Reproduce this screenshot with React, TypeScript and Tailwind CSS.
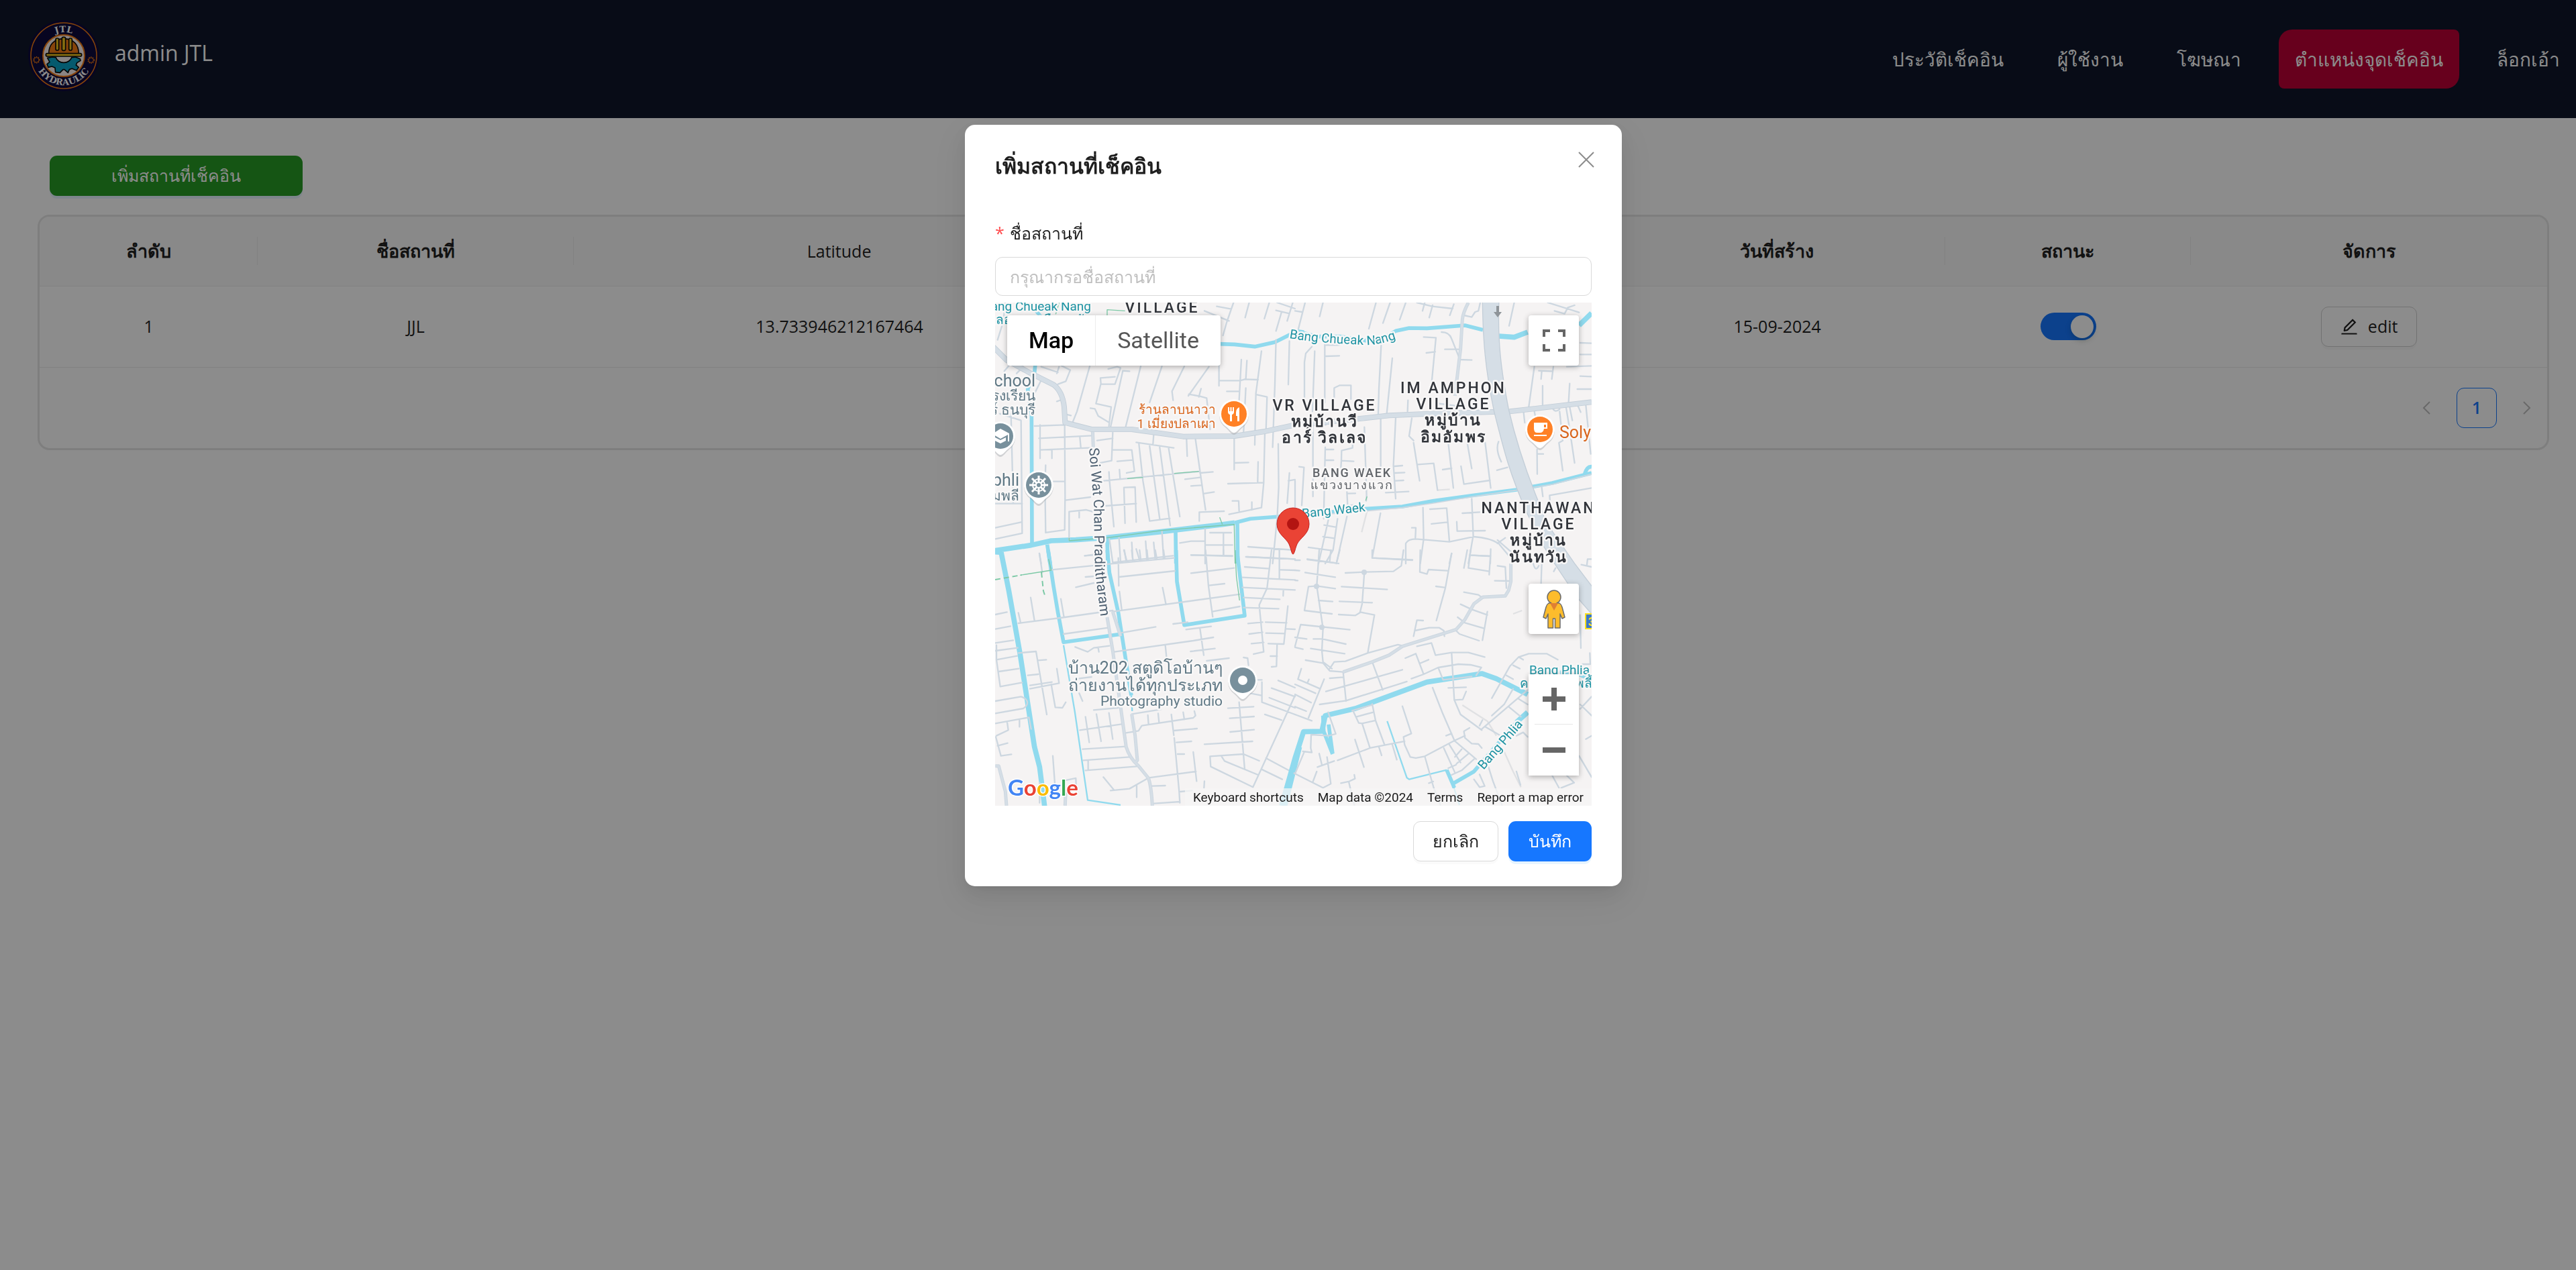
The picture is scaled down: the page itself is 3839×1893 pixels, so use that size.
import React from "react";

const WATER = "#90daee";
const MINOR = "#cdd7e0";
const MAJOR = "#d5dee6";
const MAJOR_EDGE = "#c3ced8";
const TRACK = "#7cc9a6";
const PALE = "#e0e1e3";

const QUADRANTS = [
  {
    id: "nw",
    transform: "translate(-13 -11) scale(0.3333)",
    minor:
      "M85 33L75 120L50 200M975 70L1085 115M1105 33L1075 120L1058 180M1030 50L1095 62M1175 33L1157 100M1265 33L1243 105M1295 68L1355 82M1320 75L1295 160M1300 33L1380 60M1370 33L1345 115M105 310L80 340M165 320L135 350M245 320L320 345M325 320L315 350M335 315L375 335L355 385L320 398M245 380L215 440M462 318L405 520L385 570M315 475L335 468M345 530L378 538M545 330L585 320L600 325L575 398L513 398M575 365L510 370L512 395L490 485L558 500L548 585M465 505L485 508L500 540L550 570M640 340L610 338L555 590M690 318L620 600M785 318L730 480M885 318L830 430L835 470M995 320L903 450M905 443L955 452L985 460L1000 600M960 418L950 455M1040 270L1040 405M1140 288L1130 470M1165 292L1160 375M1040 382L1135 382L1155 376L1215 378M1230 250L1205 440L1200 670M1075 430L1130 430M1210 445L1255 455L1250 610M1295 200L1290 400L1280 680M1355 205L1350 400M1150 610L1160 415M110 530L120 930M60 530L155 560L160 1065L40 1090M155 1015L40 1040M40 932L160 932M215 585L348 580M235 640L470 628M350 580L352 900L350 1050L265 1062L262 850L265 760M240 580L240 730M240 692L470 682M293 695L293 730M418 635L422 680M300 833L350 833M352 917L465 903M370 1095L370 968L445 960L475 968M415 965L415 995M565 615L560 740L510 750M495 650L565 640M565 692L650 692L662 788L627 795M585 743L655 737M670 658L838 683M748 625L745 665M682 665L700 830L730 1010L820 998M730 675L775 1000M775 680L822 1030M815 685L865 990M548 790L550 825L570 1035M595 780L598 820M525 830L955 788M895 645L898 720M935 645L980 960M955 795L1013 790M888 823L955 815M915 853L960 850M970 888L1018 880M1108 640L1108 780M1108 750L1172 748M1215 745L1213 835M1080 843L1240 838M1245 620L1240 840L1230 950L1085 980M1100 920L1128 920L1130 965M1187 925L1187 960M952 1010L952 970L1063 966M620 1020L615 860L665 858L670 1015M535 942L670 932M1305 665L1307 860L1300 1000L1280 1200M1355 795L1345 930M1380 825L1350 830M550 1090L565 1195L835 1165M593 1085L600 1195M615 1140L628 1190M650 1105L655 1190M670 1135L685 1185M712 1100L718 1185M748 1105L755 1180M785 1055L792 1175M865 1108L915 1100L975 1100M978 1045L978 1200M1000 1062L1095 1062M1060 1062L1060 1165M980 1117L1100 1117M915 1162L1100 1165M1170 1125L1380 1140M1165 1170L1380 1180M440 1165L480 1160M237 1155L245 1200",
    major: "M0 200L90 290L200 350L300 400Q340 430 348 500L352 570L470 600L650 600L880 632L1110 630L1240 610L1380 580L1520 570",
    middle: "M475 605L478 680",
    water: "M0 1148L200 1118L290 1098L400 1094L540 1084L780 1058L1050 1026L1110 1018",
    waterMid:
      "M195 33L242 95L215 345L185 420L202 535L204 1110M1110 1018L1180 1000L1310 990L1380 980M1040 218L1110 220L1200 230L1290 210L1380 165M1122 1015L1124 1200M846 1055L848 1200M540 1090L543 1200M272 1115L285 1200",
    waterThin: "",
    track: "M370 1098L540 1085L785 1052L1108 1025L1112 1200M630 820L700 815M840 797L950 788M1043 993L1055 1025M540 90L540 65L620 70M325 33L310 85M370 1098L370 1085",
    pale: "",
  },
  {
    id: "ne",
    transform: "translate(447 -11) scale(0.3333)",
    minor:
      "M0 70L30 75M45 33L15 150M125 33L110 95M362 33L330 150M425 33L393 125M495 33L468 110M580 33L570 70M545 33L613 50L705 60M615 45L600 100M710 40L692 90M755 90L790 98L805 75L820 70L828 33M575 187L630 190L610 400M587 258L627 253M655 165Q690 165 700 195L738 290M670 242L735 242M735 288L790 290M75 230L48 260L42 300L42 480M88 250L78 520M133 210L133 480M135 223L198 223M138 273L198 271M385 225L375 420L372 530M435 282L410 530M980 33L957 137M1070 320L1045 500M1090 338L1150 340M1103 340L1100 375M1155 320L1148 375M1107 405L1107 490M1228 395L1223 480M1262 420L1326 420M1275 362L1326 364M1215 320L1326 316M1275 265L1326 265M1275 213L1326 215M1130 33L1270 77M1160 70L1205 83L1220 55L1250 45M175 470L175 415L200 403L250 403L250 465M80 560L80 900M135 680L128 1000M135 690L172 690M135 738L172 738M258 650L257 683L208 695L207 740L262 743M207 740L205 770M310 590L320 900L318 920M383 545L383 780M450 550L440 760L450 910M445 765L480 762M448 795L490 793M450 830L485 828M405 883L508 878M232 880L235 940L270 938M235 887L270 886M522 550L510 630L530 650M530 660L557 830M548 757L620 752L637 872M685 660L708 862M660 780L700 774M770 660L790 775M742 765L755 845L872 828M850 660L875 862M505 470L503 520M645 485L720 495M910 655Q895 690 922 745M903 783L950 770M1022 525L1027 570M1070 520L1075 545M1082 690L1083 800M1083 710L1110 710M1150 500Q1160 530 1183 510M1183 520L1197 650L1180 660L1197 785M1210 490L1228 600L1250 750M1300 490L1322 710M1228 500L1240 560M1265 495L1277 523M1140 920L1138 895L1326 862M18 767L40 770L30 940M0 830L0 960M150 1000L105 1200M190 1000L170 1140L135 1200M232 990L185 1200M130 1028L185 1038M125 1080L175 1087M60 1128L165 1142M55 1180L195 1200M382 975L345 1175L525 1185M603 957L678 952L690 1100M572 950L575 1090L560 1200M610 1023L680 1015M522 1040L540 1040L538 1085M790 910L797 1080M748 975L825 970M723 1013L725 1055L850 1053M495 1200L495 1110Q505 1090 540 1090L690 1103L800 1080Q870 1085 910 1110L960 1170M795 1085L775 1200M700 1155L690 1200M785 1163L875 1167M875 1135L873 1200M905 1110L940 1085M905 1095L980 1160M1103 860L1108 900",
    major: "M-10 575L140 568L290 552L420 538L600 530L960 520L1326 478",
    middle: "M775 33Q750 80 748 110L740 240L715 450",
    water: "M912 183L980 188L1040 165M1270 135L1326 80",
    waterMid:
      "M0 160L100 185L200 185L330 205L400 190L450 160L510 147L590 148L760 135L840 155M0 160L40 165M-20 975L130 972L320 955L480 945L620 920L800 895L990 870L1150 840L1326 795M1295 800Q1305 765 1326 767",
    waterThin: "",
    track: "M322 900L316 918",
    pale: "M322 965L298 1060M637 872L692 868",
  },
  {
    id: "sw",
    transform: "translate(-13 369) scale(0.3333)",
    minor:
      "M237 15L250 100M290 88L550 62L840 35M440 25L480 22M443 120L478 117M400 166L480 147M590 35L592 160M593 120L843 93M617 0L625 50M650 0L655 45M685 0L690 42M718 0L722 40M755 0L762 38M792 0L797 35M595 185L605 265M565 275L1135 197M788 168L803 243M980 0L993 160L1012 298M915 22L1100 27M1060 0L1060 25M915 103L1108 80M995 158L1065 150M1010 275L1133 252M143 327L330 303L565 270M198 212L215 315M333 218L347 300M143 280L152 320M40 288L92 277M40 353L108 340M40 415L120 403M40 450L140 437M45 425L45 490L62 610L160 592M45 490L138 473M55 543L145 530M345 375L545 347M143 460L222 453L270 735M230 493L268 490M185 560L232 555M195 620L325 595L315 530M195 605L293 590M290 600L308 703L340 705L355 680M40 675L155 655Q185 665 183 685Q180 700 165 708L40 730M40 775L190 748L200 800M93 770L98 805L45 830M148 760L148 790M42 835L65 920L112 913M50 875L95 863M297 920L308 1070M238 1040L238 1130M350 1030L400 1020L402 1070M600 370L757 343M835 330L900 322M572 455L925 405L1015 390M800 425L805 475M893 355L1005 341M955 350L972 470M913 453L1022 440M985 495L1085 483M397 433L453 455L480 437L550 428M500 437L503 455M408 575L470 567M480 715L590 705M415 640L430 675M443 745L460 860M492 733L513 855M548 728L565 845M418 805L605 778M430 890L625 878M432 940L640 925M443 985L672 967M455 940L455 983M523 1015L570 1072M555 1075L640 1067L722 1020M672 1050L672 1105M650 733L780 712M625 817L680 808L695 785L925 750L935 740L930 720M722 738L725 778M768 730L772 770M827 735L838 828M880 725L885 757M838 807L942 798M840 840L862 1080L865 1130M850 860L917 855M855 912L885 912M925 903L940 1033M725 1018L937 990M740 1055L800 1053M868 1080L920 1075M750 1133L865 1125M975 1033L973 1063M1130 680L1155 980M1080 707L1195 700M1088 752L1197 744M1090 813L1197 803M975 868L1190 855M1000 922L1150 912L1220 942M1000 922L1003 968L1192 1060M1050 920L1065 943L1215 1005M1192 1060L1380 650M1245 735L1320 760M1265 660L1380 705M1305 583L1380 615M1275 617L1380 655M1232 590L1232 680L1380 735M1250 930L1380 1000M1230 980L1323 1025M1150 480L1168 483L1172 515M1210 580L1232 580M1180 640L1230 650M1275 0L1255 170L1220 245L1240 455L1195 465M1160 30L1380 40M1155 75L1265 83M1145 122L1380 133M1145 167L1380 178M1150 212L1312 220M1150 257L1307 262M1328 180L1327 205M1310 0L1310 128M1315 88L1380 90M1348 250L1330 420L1260 418M1170 328L1235 322M1248 322L1343 325M1250 371L1335 373M1175 375L1235 367M1185 418L1240 413M1300 420L1297 520L1275 522M1270 474L1300 474M1343 352L1380 354",
    major: "",
    middle:
      "M540 300L565 450L600 700L625 880Q640 930 680 965L725 1020Q738 1060 742 1143M565 275L600 385M650 733L665 830L675 940L665 950M40 965L55 965L85 1080L90 1143M355 1070L352 1143",
    water: "M66 10L100 180L150 460L215 880L238 970L262 1160M0 5L70 10M1400 880L1330 1160",
    waterMid: "M276 0L300 160L320 280L345 412L605 375M541 0L550 100L590 280L620 470L640 600L648 650M848 0L852 140L885 335L1155 293L1120 0",
    waterThin: "M345 425L395 720L453 1118L600 1140M648 650L652 720",
    track: "M150 112L290 90L278 40M1112 0L1118 120L1132 225",
    pale: "",
  },
  {
    id: "se",
    transform: "translate(447 369) scale(0.3333)",
    minor:
      "M108 0L97 160L125 350L120 450L125 500L165 530M55 42L185 58L200 0M160 0L155 50M45 100L180 121M0 45L22 45M0 90L20 92M0 135L12 136M97 160L180 172M97 160L60 163L42 270L165 285M105 225L168 230M225 102L310 98L440 95L475 70L485 0M310 98L300 240L290 280L270 292L195 288M208 163L412 176M198 229L345 235M345 0L345 35L525 43M295 278L355 290L325 460M245 356L25 333L0 430M0 390L52 397M82 397L122 397L227 420M0 435L35 443M70 440L222 463M47 492L125 505L155 540L215 545M560 0L558 98L590 107L597 87L680 92M700 15L672 170L632 315M630 162L668 167M770 0L755 80M785 0L775 80L868 95M873 35L868 110M780 22L870 27M155 530L175 500L225 497L325 460L460 423L490 430M755 188L820 200L840 215M740 242L790 265L860 290M727 300L760 325L845 350M860 275L838 403M720 360L735 375L823 405M893 137L960 138M905 70L940 75L945 170M530 385L545 313L573 315M535 360L600 347L645 347L665 360L668 385M545 430L610 415L628 470L700 458L775 458L848 478M345 500L392 625M215 545L228 675M155 573L215 568M138 632L480 535M110 690L228 673L500 588M493 483L540 463L575 555L520 575M557 507L597 490M575 555L640 525L730 510L785 513L833 525L810 560M640 525L662 580L790 565M700 460L712 670L740 735L835 805M685 616L765 613M712 670L750 668L765 632M615 615L660 730L712 850M835 800L1040 625M825 785L838 760M880 740L935 690L975 620M880 662L960 520L1000 478L1045 463L1125 463L1175 490M1000 478L1020 490M975 515L1005 530M945 560L975 577M955 700L1010 745M1000 665L1040 690M0 600L92 640M0 645L72 682M0 700L50 720M0 735L75 763M130 577L60 750M28 530L13 577L55 595L112 620M62 578L55 595M260 720L285 773L300 775L360 762M275 745L350 725M345 688L360 762L400 870M255 718L345 692M300 775L335 885M148 725L182 822L150 830L72 825L70 885L75 905L35 900M40 905L0 1000M190 940L335 885L490 855M268 847L308 970M435 870L455 937M375 880L387 918M480 698L520 820L485 835L490 870L515 925L540 930L580 922L712 852L760 830M780 795L755 810L760 840L790 865L820 867L835 885M675 830L700 820M580 922L620 1063L650 1140M598 1042L618 1035M665 885L715 995M690 870L740 950M712 852L810 935M715 925L745 890M722 955L775 910M700 1005L745 985L800 935M685 975L720 960M100 970L175 943M108 910L120 960M143 925L160 1045L125 1063L0 1000M97 990L80 1035M205 1042L240 1035L268 1022L265 1005M240 1035L265 1140M850 790L920 830M865 970L885 1033L925 1140M825 1003L848 1055L825 1060L800 1025M990 990L1008 1050M1270 920L1326 1015M1150 1008L1180 1063M1215 1008L1248 1040L1190 1063M1300 845L1326 830M990 830L1020 815L1040 835M1275 710L1326 655M1275 690L1326 740M1285 510L1320 510L1318 460M1275 290L1278 438M1065 60Q1075 100 1090 70M1103 60L1100 150M1157 95L1165 80M1280 65L1326 75M1305 65L1308 40L1326 40",
    major: "",
    middle: "M215 545L345 500L420 470L480 430L720 355L760 310L800 240L840 210L940 205L955 180L965 140L965 60",
    water: "M-60 1143L0 930L38 812L120 810L135 740L270 708L590 590L835 552L900 575L1040 645M1040 725L990 770M1185 550L1250 545L1326 575",
    waterMid: "M990 770L800 990L705 1045L678 983M150 780L168 910M125 740L128 810L168 912M705 1045L712 1063",
    waterThin: "M678 983L510 1025L500 1018L412 765M705 1045L735 1140",
    track: "",
    pale: "M748 693L860 765L900 830M930 890L975 990L1010 1060M975 285L1015 270",
  },
];

const HALO = "stroke-[#f8f7f7] stroke-[5px] [paint-order:stroke] [stroke-linejoin:round]";

function Pin({ x, y, color, children }: { x: number; y: number; color: string; children: React.ReactNode }) {
  return (
    <g transform={`translate(${x} ${y})`}>
      <path d="M0 29C-4 29 -7 23 -13 18A22 22 0 1 1 13 18C7 23 4 29 0 29Z" fill="#9aa0a6" opacity="0.4" transform="translate(0 2)" />
      <path d="M0 28C-4 28 -7 22 -13 18A22 22 0 1 1 13 18C7 22 4 28 0 28Z" fill="#fff" />
      <circle r="19" fill={color} />
      {children}
    </g>
  );
}

function MapDrawing() {
  return (
    <svg
      viewBox="0 0 889 750"
      preserveAspectRatio="xMidYMid slice"
      className="block h-full w-full bg-[#f5f3f3] font-[Roboto,sans-serif]"
      role="img"
      aria-label="Map of Bang Waek"
    >
      <g fill="none" strokeLinejoin="round">
        {QUADRANTS.map((q) => (
          <g key={q.id} transform={q.transform}>
            <path d={q.pale} stroke={PALE} strokeWidth="7" />
            <path d={q.water} stroke={WATER} strokeWidth="23" />
            <path d={q.waterMid} stroke={WATER} strokeWidth="17" />
            <path d={q.waterThin} stroke={WATER} strokeWidth="7" />
            <path d={q.minor} stroke={MINOR} strokeWidth="7" strokeLinecap="round" />
            <path d={q.middle} stroke={MINOR} strokeWidth="15" />
            <path d={q.middle} stroke={MAJOR} strokeWidth="9" />
            <path d={q.track} stroke={TRACK} strokeWidth="4" />
          </g>
        ))}
        {QUADRANTS.slice(0, 2).map((q) => (
          <g key={q.id} transform={q.transform}>
            <path d={q.major} stroke={MAJOR_EDGE} strokeWidth="24" />
            <path d={q.major} stroke={MAJOR} strokeWidth="19" />
          </g>
        ))}
        <g transform="translate(447 -11) scale(0.3333)">
          <path d="M-20 985L130 980L320 965L480 950L620 930L800 900L990 872L1150 846L1326 800" stroke={MINOR} strokeWidth="5" />
          <path
            d="M838 20L912 20C905 200 920 330 955 510C985 640 1030 780 1085 915L1120 1010L1160 1070L1250 1200L1326 1300L1400 1400L1400 1500L1326 1425L1260 1350L1160 1200L1110 1120L1040 980C960 800 935 700 890 520C850 330 840 200 838 20Z"
            fill={MAJOR}
            stroke={MAJOR_EDGE}
            strokeWidth="4"
          />
        </g>
        <path d="M0 413L40 406M69 402L72 430L74 436" stroke={TRACK} strokeWidth="2" strokeDasharray="8 5" />
      </g>
      <g fill={MINOR}>
        <circle cx="479" cy="423" r="4" />
        <circle cx="550" cy="402" r="4" />
        <circle cx="487" cy="484" r="4" />
      </g>
      <path d="M747 5h4v9h4l-6 8l-6 -8h4z" fill="#8e9499" />

      <g className={`fill-[#1d93a3] text-[19px] ${HALO}`}>
        <text x="143" y="12" textAnchor="end">Bang Chueak Nang</text>
        <text x="142" y="32" textAnchor="end">คลองบางเชือกหนัง</text>
        <path id="canal-north" d="M438 53C480 60 515 61 550 63C570 63 580 60 604 52" fill="none" stroke="none" />
        <text>
          <textPath href="#canal-north">Bang Chueak Nang</textPath>
        </text>
        <text transform="translate(458 321) rotate(-6)">Bang Waek</text>
        <text x="796" y="554">Bang Phlia</text>
        <text x="782" y="574">คลองบางเพลี้ย</text>
        <text transform="translate(728 697) rotate(-49)">Bang Phlia</text>
      </g>

      <g className={`fill-[#31343a] text-[23px] font-medium tracking-[3px] ${HALO}`} textAnchor="middle">
        <text x="249" y="15">VILLAGE</text>
        <text x="491" y="161">VR VILLAGE</text>
        <text x="683" y="135">IM AMPHON</text>
        <text x="683" y="159">VILLAGE</text>
        <text x="810" y="314">NANTHAWAN</text>
        <text x="810" y="338">VILLAGE</text>
      </g>
      <g className={`fill-[#31343a] text-[23px] font-bold tracking-widest ${HALO}`} textAnchor="middle">
        <text x="249" y="39">หมู่บ้าน</text>
        <text x="491" y="185">หมู่บ้านวี</text>
        <text x="491" y="209">อาร์ วิลเลจ</text>
        <text x="683" y="183">หมู่บ้าน</text>
        <text x="683" y="208">อิมอัมพร</text>
        <text x="810" y="362">หมู่บ้าน</text>
        <text x="810" y="387">นันทวัน</text>
      </g>
      <g className={`fill-[#5f6368] text-[18px] font-medium tracking-widest ${HALO}`} textAnchor="middle">
        <text x="532" y="260">BANG WAEK</text>
        <text x="532" y="278">แขวงบางแวก</text>
      </g>

      <g className={`fill-[#5f7885] text-[25px] ${HALO}`} textAnchor="end">
        <text x="60" y="125">School</text>
        <text x="60" y="146" className="text-[21px]">โรงเรียน</text>
        <text x="60" y="167" className="text-[21px]">ร์ ธนบุรี</text>
        <text x="36" y="273">Champhli</text>
        <text x="36" y="295" className="text-[21px]">ชุมพลี</text>
        <text x="339" y="553">บ้าน202 สตูดิโอบ้านๆ</text>
        <text x="339" y="579">ถ่ายงานได้ทุกประเภท</text>
        <text x="339" y="601" className="text-[21px]">Photography studio</text>
      </g>

      <g className={`fill-[#d9651c] text-[19px] ${HALO}`}>
        <text x="329" y="166" textAnchor="end">ร้านลาบนาวา</text>
        <text x="329" y="187" textAnchor="end">1 เมี่ยงปลาเผา</text>
        <text x="841" y="202" className="text-[25px]">Solyn</text>
      </g>

      <g className={`fill-[#4d5f70] text-[21px] ${HALO}`}>
        <path id="soi" d="M140 217L147 300L149 400L160 490" fill="none" stroke="none" />
        <text>
          <textPath href="#soi">Soi Wat Chan Pradittharam</textPath>
        </text>
      </g>

      <Pin x={356} y={166} color="#ff8126">
        <path d="M-9 -10v7q0 3 3 4v10h3v-10q3 -1 3 -4v-7h-2v6h-1.500v-6h-2v6h-1.500v-6zM8 -10q-5 2 -5 8v5h2v8h3z" fill="#fff" />
      </Pin>
      <Pin x={812} y={189} color="#ff8126">
        <path d="M-9 -10h20v9h-5q-1 6 -6 6h-4q-5 0 -5 -6zM6 -7v4h3v-4zM-9 8h19v2h-19z" fill="#fff" fillRule="evenodd" />
      </Pin>
      <Pin x={8} y={199} color="#78909c">
        <path d="M0 -11l13 7v12h-2v-10l-11 6l-12 -7zM-8 2l8 4l8 -4v5l-8 4l-8 -4z" fill="#fff" />
      </Pin>
      <Pin x={65} y={272} color="#78909c">
        <g stroke="#fff" fill="none">
          <circle r="9" strokeWidth="2" />
          <path d="M0 -14V-4M0 14V4M-14 0H-4M14 0H4M-10 -10L-3 -3M10 10L3 3M-10 10L-3 3M10 -10L3 -3" strokeWidth="3" />
          <circle r="4" strokeWidth="2" />
        </g>
      </Pin>
      <Pin x={369} y={563} color="#78909c">
        <circle r="7" fill="#fff" />
      </Pin>

      <g transform="translate(444 331)">
        <path
          d="M0 44C-2 44 -3 36 -6 29C-10 20 -24 14 -24 -1A24 24 0 0 1 24 -1C24 14 10 20 6 29C3 36 2 44 0 44Z"
          fill="#ea4335"
          stroke="#c5221f"
          strokeWidth="1"
        />
        <circle r="9" cy="-1" fill="#b31412" />
      </g>

      <g>
        <rect x="880" y="464" width="24" height="22" fill="#3b78c8" stroke="#fde01c" strokeWidth="2" />
        <text x="884" y="482" className="fill-[#fde01c] text-[18px] font-bold">3</text>
      </g>

      <text
        x="19"
        y="735"
        className="font-[Lato,sans-serif] text-[33px] font-bold stroke-white stroke-[3px] [paint-order:stroke] [stroke-linejoin:round]"
      >
        <tspan fill="#4285f4">G</tspan>
        <tspan fill="#ea4335">o</tspan>
        <tspan fill="#fbbc04">o</tspan>
        <tspan fill="#4285f4">g</tspan>
        <tspan fill="#34a853">l</tspan>
        <tspan fill="#ea4335">e</tspan>
      </text>
    </svg>
  );
}

function Logo() {
  return (
    <svg viewBox="0 0 108 108" className="size-[108px] shrink-0" role="img" aria-label="JTL Hydraulic">
      <circle cx="54" cy="54" r="53" fill="#0e0a3c" />
      <circle cx="54" cy="54" r="49" fill="none" stroke="#f57c14" strokeWidth="1.500" />
      <circle cx="54" cy="54" r="31" fill="#fbf3f0" stroke="#f57c14" strokeWidth="2" />
      <g transform="translate(54 54) scale(0.3333) translate(-285 -248)" stroke="#0a0a0a" strokeWidth="5" strokeLinejoin="round">
        <path
          d="M212 258L234 254L250 256A36 30 0 0 0 320 256L338 254L358 262L360 270L344 280L340 290L352 300L342 314L322 306L310 310L304 324L288 310L282 310L268 324L248 322L246 302L232 296L216 300L210 286L222 276Z"
          fill="#0aa5c8"
        />
        <path d="M218 240C218 200 240 172 285 172C330 172 352 200 352 240Z" fill="#f57c14" />
        <rect x="249" y="170" width="14" height="54" rx="6" fill="#f5c81e" />
        <rect x="277" y="165" width="16" height="60" rx="6" fill="#f5c81e" />
        <rect x="308" y="170" width="14" height="54" rx="6" fill="#f5c81e" />
        <rect x="205" y="238" width="160" height="13" rx="6" fill="#f5c81e" />
        <g fill="none" stroke="#f57c14">
          <circle cx="163" cy="267" r="11" strokeWidth="3" />
          <circle cx="163" cy="267" r="14" strokeWidth="4" strokeDasharray="4 5" />
          <circle cx="407" cy="268" r="11" strokeWidth="3" />
          <circle cx="407" cy="268" r="14" strokeWidth="4" strokeDasharray="4 5" />
        </g>
      </g>
      <path id="logo-top" d="M19 54A35 35 0 0 1 89 54" fill="none" />
      <path id="logo-bottom" d="M10 54A44 44 0 0 0 98 54" fill="none" />
      <g className="fill-white font-['DejaVu_Serif',serif] font-bold" textAnchor="middle">
        <text className="text-[13px]">
          <textPath href="#logo-top" startOffset="50%">JTL</textPath>
        </text>
        <text className="text-[13px]">
          <textPath href="#logo-bottom" startOffset="50%">HYDRAULIC</textPath>
        </text>
      </g>
    </svg>
  );
}

const NAV = ["ประวัติเช็คอิน", "ผู้ใช้งาน", "โฆษณา", "ตำแหน่งจุดเช็คอิน", "ล็อกเอ้า"];
const ACTIVE = "ตำแหน่งจุดเช็คอิน";

const COLUMNS = [
  { title: "ลำดับ", width: "w-[8.7%]" },
  { title: "ชื่อสถานที่", width: "w-[12.6%]" },
  { title: "Latitude", width: "w-[21.2%]" },
  { title: "", width: "w-[20.1%]" },
  { title: "วันที่สร้าง", width: "w-[13.4%]" },
  { title: "สถานะ", width: "w-[9.8%]" },
  { title: "จัดการ", width: "w-[14.2%]" },
];

const CONTROL = "flex items-center justify-center bg-white shadow-[0_2px_8px_rgba(0,0,0,0.3)]";

function MapPanel() {
  return (
    <div className="relative mt-[10px] h-[750px] w-full overflow-hidden font-[Roboto,sans-serif]">
      <MapDrawing />
      <div className="absolute top-[19px] left-[18px] flex h-[75px] rounded-[4px] bg-white text-[34px] shadow-[0_2px_8px_rgba(0,0,0,0.3)]">
        <button type="button" className="border-r border-[#ececec] px-8 font-medium text-black">Map</button>
        <button type="button" className="px-8 text-[#565656]">Satellite</button>
      </div>
      <button type="button" aria-label="Toggle fullscreen view" className={`absolute top-[19px] right-[19px] size-[75px] rounded-[4px] ${CONTROL}`}>
        <svg viewBox="0 0 34 33" className="h-[33px] w-[34px]" fill="#666" aria-hidden="true">
          <path d="M0 0h11v4h-7v7h-4zM34 0v11h-4v-7h-7v-4zM0 33v-11h4v7h7v4zM34 33h-11v-4h7v-7h4z" />
        </svg>
      </button>
      <div className="absolute right-[19px] bottom-[45px] flex flex-col gap-[60px]">
        <button type="button" aria-label="Street View" className={`size-[75px] rounded-[4px] ${CONTROL}`}>
          <svg viewBox="0 0 34 58" className="h-[58px] w-[34px]" aria-hidden="true">
            <g fill="#fdbc2c" stroke="#6b6b6b" strokeWidth="1.500" strokeLinejoin="round">
              <path d="M9 20H25Q28 22 29 26L33 41L29 43L26 36V57H18.500V43H15.500V57H8V36L5 43L1 41L5 26Q6 22 9 20Z" />
              <circle cx="17" cy="11" r="10" />
            </g>
            <path d="M11 20H23L17 31Z" fill="#e07f33" />
          </svg>
        </button>
        <div className="flex flex-col bg-white px-[9px] shadow-[0_2px_8px_rgba(0,0,0,0.3)]">
          <button type="button" aria-label="Zoom in" className="flex h-[75px] w-[57px] items-center justify-center border-b border-[#e6e6e6]">
            <svg viewBox="0 0 34 34" className="size-[34px]" fill="#666" aria-hidden="true">
              <path d="M13 0h8v13h13v8h-13v13h-8v-13h-13v-8h13z" />
            </svg>
          </button>
          <button type="button" aria-label="Zoom out" className="flex h-[76px] w-[57px] items-center justify-center">
            <svg viewBox="0 0 34 8" className="h-2 w-[34px]" fill="#666" aria-hidden="true">
              <path d="M0 0h34v8h-34z" />
            </svg>
          </button>
        </div>
      </div>
      <div className="absolute right-0 bottom-0 flex h-[26px] items-center gap-[21px] bg-[#f5f5f5]/75 px-3 pt-0.5 text-[19px] leading-6 text-[#1a1a1a]">
        <button type="button">Keyboard shortcuts</button>
        <span>Map data ©2024</span>
        <a href="#terms">Terms</a>
        <a href="#report">Report a map error</a>
      </div>
    </div>
  );
}

export default function App() {
  return (
    <div className="relative min-h-screen bg-white font-['Open_Sans',sans-serif] text-[25px] text-[#1f1f1f]">
      <header className="flex h-[176px] items-center justify-between bg-slate-900 text-white">
        <div className="flex items-center gap-[22px] pb-2.5 pl-[41px]">
          <Logo />
          <span className="pb-2 text-[32px]">admin JTL</span>
        </div>
        <nav className="flex items-center gap-8 text-[28px] font-medium">
          {NAV.map((item) => (
            <a
              key={item}
              href="#nav"
              className={
                item === ACTIVE
                  ? "flex h-[88px] items-center rounded-[8px] rounded-tl-[20px] rounded-br-[20px] bg-[#bc0035] px-6"
                  : "flex h-[88px] items-center px-6"
              }
            >
              {item}
            </a>
          ))}
        </nav>
      </header>

      <main className="pt-14 pr-10 pl-14">
        <button
          type="button"
          className="ml-[18px] h-[60px] w-[377px] rounded-[11px] bg-[#279b25] text-white shadow-[0_4px_0_rgba(5,145,255,0.1)]"
        >
          เพิ่มสถานที่เช็คอิน
        </button>

        <section className="mt-7 overflow-hidden rounded-[18px] border-[3px] border-[#e6e6e6]">
          <table className="w-full table-fixed border-collapse text-center">
            <thead className="bg-[#fafafa]">
              <tr className="h-[103px] border-b border-[#ebebeb]">
                {COLUMNS.map((c, i) => (
                  <th key={i} scope="col" className={`${c.width} p-0`}>
                    <div className={i < 6 ? "flex h-[42px] items-center justify-center border-r border-[#ececec]" : "flex h-[42px] items-center justify-center"}>
                      <span className={c.title === "Latitude" ? "font-medium" : "text-[27px] font-bold"}>{c.title}</span>
                    </div>
                  </th>
                ))}
              </tr>
            </thead>
            <tbody>
              <tr className="h-[121px] border-b border-[#ebebeb]">
                <td>1</td>
                <td>JJL</td>
                <td>13.733946212167464</td>
                <td></td>
                <td>15-09-2024</td>
                <td>
                  <label className="inline-flex h-[41px] w-[83px] items-center justify-end rounded-full bg-[#1677ff] px-1 align-middle">
                    <input type="checkbox" role="switch" defaultChecked aria-label="สถานะ" className="sr-only" />
                    <span className="size-[34px] rounded-full bg-white shadow-[0_4px_8px_rgba(0,35,11,0.2)]" />
                  </label>
                </td>
                <td>
                  <button
                    type="button"
                    className="inline-flex h-[60px] items-center gap-[15px] rounded-[11px] border border-[#d0d0d0] bg-white px-7 align-middle shadow-[0_4px_0_rgba(0,0,0,0.02)]"
                  >
                    <svg viewBox="64 64 896 896" className="size-[26px]" fill="currentColor" aria-hidden="true">
                      <path d="M257.700 752c2 0 4-.200 6-.500L431.900 722c2-.400 3.900-1.300 5.300-2.800l423.900-423.900a9.960 9.960 0 000-14.100L694.900 114.900c-1.900-1.900-4.400-2.900-7.100-2.900s-5.200 1-7.100 2.900L256.800 538.800c-1.500 1.500-2.400 3.300-2.800 5.300l-29.500 168.200a33.500 33.500 0 009.400 29.800c6.600 6.400 14.900 9.900 23.800 9.900zm67.400-174.400L687.800 215l73.300 73.300-362.700 362.600-88.900 15.700 15.600-89zM880 836H144c-17.700 0-32 14.300-32 32v36c0 4.400 3.600 8 8 8h784c4.400 0 8-3.600 8-8v-36c0-17.700-14.300-32-32-32z" />
                    </svg>
                    edit
                  </button>
                </td>
              </tr>
            </tbody>
          </table>
          <div className="flex justify-end gap-[15px] py-[30px]">
            <button type="button" aria-label="Previous page" className="flex size-[60px] items-center justify-center text-[#bfbfbf]">
              <svg viewBox="0 0 12 20" className="h-5 w-3" fill="none" stroke="currentColor" strokeWidth="2" aria-hidden="true">
                <path d="M11 1L2 10L11 19" />
              </svg>
            </button>
            <button type="button" aria-current="page" className="size-[60px] rounded-[11px] border border-[#1677ff] font-semibold text-[#1677ff]">
              1
            </button>
            <button type="button" aria-label="Next page" className="flex size-[60px] items-center justify-center text-[#bfbfbf]">
              <svg viewBox="0 0 12 20" className="h-5 w-3" fill="none" stroke="currentColor" strokeWidth="2" aria-hidden="true">
                <path d="M1 1L10 10L1 19" />
              </svg>
            </button>
          </div>
        </section>
      </main>

      <div className="fixed inset-0 flex items-start justify-center bg-black/45 pt-[186px] pl-4">
        <div
          role="dialog"
          aria-modal="true"
          aria-labelledby="dialog-title"
          className="relative w-full max-w-[979px] rounded-[15px] bg-white px-[45px] pt-[38px] pb-[37px] shadow-[0_11px_30px_rgba(0,0,0,0.08),0_6px_12px_-8px_rgba(0,0,0,0.12),0_17px_53px_15px_rgba(0,0,0,0.05)]"
        >
          <button type="button" aria-label="Close" className="absolute top-[22px] right-[23px] flex size-[60px] items-center justify-center text-[#8c8c8c]">
            <svg viewBox="0 0 24 24" className="size-6" fill="none" stroke="currentColor" strokeWidth="2" aria-hidden="true">
              <path d="M1 1L23 23M23 1L1 23" />
            </svg>
          </button>
          <h2 id="dialog-title" className="text-[32px] leading-[45px] font-bold">เพิ่มสถานที่เช็คอิน</h2>
          <form className="mt-[49px]">
            <label htmlFor="place-name" className="mb-[5px] flex h-[60px] items-center gap-2">
              <span className="text-[#ff4d4f]">*</span>
              ชื่อสถานที่
            </label>
            <input
              id="place-name"
              type="text"
              placeholder="กรุณากรอชื่อสถานที่"
              className="block h-[58px] w-full rounded-[11px] border border-[#d9d9d9] px-[21px] outline-none placeholder:text-[#bfbfbf]"
            />
            <MapPanel />
            <div className="mt-[23px] flex justify-end gap-[15px]">
              <button type="button" className="h-[60px] rounded-[11px] border border-[#d9d9d9] bg-white px-7 shadow-[0_4px_0_rgba(0,0,0,0.02)]">
                ยกเลิก
              </button>
              <button type="submit" className="h-[60px] rounded-[11px] bg-[#1677ff] px-[30px] text-white shadow-[0_4px_0_rgba(5,145,255,0.1)]">
                บันทึก
              </button>
            </div>
          </form>
        </div>
      </div>
    </div>
  );
}
